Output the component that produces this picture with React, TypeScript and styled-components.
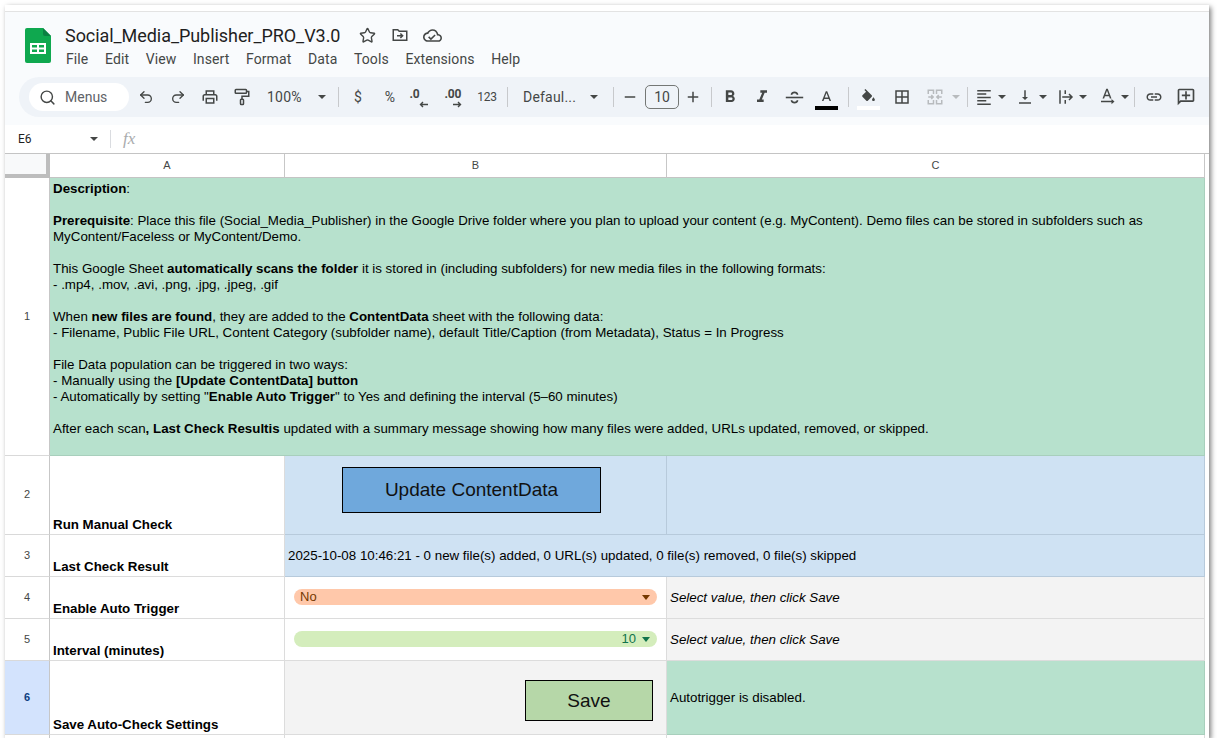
import React from 'react'
import styled, { createGlobalStyle } from 'styled-components'
import { Search, Star, Undo2, Redo2 } from 'lucide-react'

const GlobalStyle = createGlobalStyle`
  html, body {
    margin: 0;
    padding: 0;
    background: #fff;
    overflow: hidden;
  }
  body {
    padding: 5px 0 0 5px;
    font-family: 'Liberation Sans', Arial, sans-serif;
  }
`

const Window = styled.div`
  width: 1204px;
  height: 733px;
  background: #fff;
  box-shadow: 2px 2px 5px rgba(0, 0, 0, 0.5);
  overflow: hidden;
  display: flex;
  flex-direction: column;
`

const TopEdge = styled.div`
  height: 6px;
  flex: none;
  border-bottom: 1px solid #e3e3e3;
`

const Header = styled.header`
  background: #f9fbfd;
  height: 113px;
  flex: none;
  display: flex;
  flex-direction: column;
`

const TitleRow = styled.div`
  height: 65px;
  flex: none;
  display: flex;
  padding: 16px 0 0 20px;
  box-sizing: border-box;
`

const Logo = styled.svg`
  width: 26px;
  height: 35px;
  flex: none;
  margin-right: 14px;
`

const TitleColumn = styled.div`
  display: flex;
  flex-direction: column;
  font-family: Roboto, sans-serif;
  color: #1f1f1f;
`

const TitleLine = styled.div`
  display: flex;
  align-items: center;
  height: 24px;
  margin-top: -5px;
`

const FileName = styled.span`
  font-size: 18px;
  letter-spacing: -0.06px;
  color: #1f1f1f;
  margin-right: 19px;
`

const TitleIcon = styled.span`
  width: 32px;
  height: 24px;
  display: flex;
  align-items: center;
  justify-content: flex-start;
  color: #444746;
`

const MenuBar = styled.nav`
  display: flex;
  gap: 16.6px;
  margin: 4px 0 0 1px;
  font-size: 14px;
  letter-spacing: 0.1px;
  color: #444746;
`

const Toolbar = styled.div`
  height: 40px;
  margin-left: 14px;
  padding-left: 10px;
  flex: none;
  display: flex;
  align-items: center;
  background: #eff3f8;
  border-radius: 20px 0 0 20px;
  color: #444746;
  font-family: Roboto, sans-serif;
`

const SearchPill = styled.div`
  width: 100px;
  height: 28px;
  margin-right: 1px;
  flex: none;
  box-sizing: border-box;
  padding-left: 10px;
  display: flex;
  align-items: center;
  gap: 9px;
  background: #fff;
  border-radius: 14px;
  font-size: 14px;
  color: #5f6368;
`

const Slot = styled.div<{ $w: number; $ml?: number }>`
  width: ${(p) => p.$w}px;
  margin-left: ${(p) => p.$ml || 0}px;
  height: 32px;
  flex: none;
  display: flex;
  align-items: center;
  justify-content: center;
  position: relative;
  font-size: 14px;
`

const DropText = styled.div<{ $w: number; $pad: number; $end: number }>`
  width: ${(p) => p.$w}px;
  height: 32px;
  flex: none;
  box-sizing: border-box;
  padding: 0 ${(p) => p.$end}px 0 ${(p) => p.$pad}px;
  display: flex;
  align-items: center;
  justify-content: space-between;
  font-size: 14px;
  letter-spacing: 0.2px;
`

const Caret = styled.span<{ $muted?: boolean }>`
  width: 0;
  height: 0;
  flex: none;
  border-left: 4.5px solid transparent;
  border-right: 4.5px solid transparent;
  border-top: 4.5px solid ${(p) => (p.$muted ? '#b8bbbe' : '#444746')};
`

const Sep = styled.span`
  width: 1px;
  height: 20px;
  flex: none;
  margin: 0 4px;
  background: #c7c9cc;
`

const Decimal = styled.div<{ $shift: number; $arrow: number }>`
  display: flex;
  flex-direction: column;
  align-items: flex-start;
  font-size: 12px;
  font-weight: 700;
  line-height: 10px;
  letter-spacing: -0.2px;
  margin: 2px ${(p) => p.$shift}px 0 0;

  svg {
    margin: 2px 0 0 ${(p) => p.$arrow}px;
  }
`

const SmallText = styled.span`
  font-size: 12px;
  letter-spacing: -0.2px;
`

const SymbolText = styled.span`
  font-size: 14px;
`

const SizeBox = styled.div`
  width: 34px;
  height: 24px;
  margin-left: 3px;
  flex: none;
  box-sizing: border-box;
  border: 1px solid #747775;
  border-radius: 5px;
  display: flex;
  align-items: center;
  justify-content: center;
  font-size: 14px;
`

const ColorBar = styled.span<{ $color: string }>`
  position: absolute;
  left: 50%;
  margin-left: -11.5px;
  bottom: 3px;
  width: 23px;
  height: 4px;
  background: ${(p) => p.$color};
`

const FormulaBar = styled.div`
  height: 28px;
  flex: none;
  display: flex;
  align-items: center;
  background: #fff;
  font-size: 12px;
  color: #1f1f1f;
  font-family: Roboto, sans-serif;
`

const CellName = styled.div`
  width: 93px;
  box-sizing: border-box;
  padding: 0 0 0 13px;
  display: flex;
  align-items: center;
  justify-content: space-between;
`

const FormulaSep = styled.span`
  width: 1px;
  height: 18px;
  margin: 0 12px 0 12px;
  background: #dadce0;
`

const Fx = styled.span`
  font-family: 'Liberation Serif', serif;
  font-style: italic;
  font-size: 17px;
  color: #a9abad;
`

const Grid = styled.div`
  display: grid;
  grid-template-columns: 45px 235px 382px 538px 4px;
  grid-template-rows: 24px 278px 79px 42px 42px 42px 74px 4px;
  border-top: 1px solid #c4c4c4;
  font-size: 13.33px;
  line-height: 16px;
  color: #000;
`

const Corner = styled.div`
  background: #f8f9fa;
  box-sizing: border-box;
  border-right: 4px solid #bdbdbd;
  border-bottom: 4px solid #bdbdbd;
`

const ColumnHead = styled.div`
  background: #fff;
  box-sizing: border-box;
  border-right: 1px solid #c7c7c7;
  border-bottom: 1px solid #c4c4c4;
  padding-bottom: 2px;
  display: flex;
  align-items: center;
  justify-content: center;
  font-size: 11px;
  color: #444746;
`

const RowHead = styled.div<{ $active?: boolean }>`
  background: ${(p) => (p.$active ? '#d3e3fd' : '#fff')};
  box-sizing: border-box;
  border-right: 1px solid #c7c7c7;
  border-bottom: 1px solid #d9d9d9;
  padding-bottom: 2px;
  display: flex;
  align-items: center;
  justify-content: center;
  font-size: 11px;
  font-weight: ${(p) => (p.$active ? 700 : 400)};
  color: ${(p) => (p.$active ? '#0b3d80' : '#444746')};
`

const Cell = styled.div<{ $bg?: string; $line?: string; $span?: number }>`
  background: ${(p) => p.$bg || '#fff'};
  box-sizing: border-box;
  border-right: 1px solid ${(p) => p.$line || '#dcdcdc'};
  border-bottom: 1px solid ${(p) => p.$line || '#dcdcdc'};
  grid-column: span ${(p) => p.$span || 1};
  padding: 0 3px;
  display: flex;
  white-space: nowrap;
`

const Label = styled(Cell)`
  align-items: flex-end;
  font-weight: 700;
  padding-bottom: 1px;
`

const Middle = styled(Cell)<{ $italic?: boolean }>`
  align-items: center;
  font-style: ${(p) => (p.$italic ? 'italic' : 'normal')};
`

const Description = styled.div`
  padding-top: 3px;
`

const ActionButton = styled.div<{ $bg: string; $w: number; $h: number }>`
  width: ${(p) => p.$w}px;
  height: ${(p) => p.$h}px;
  background: ${(p) => p.$bg};
  box-sizing: border-box;
  border: 1px solid #000;
  display: flex;
  align-items: center;
  justify-content: center;
  font-size: 19px;
  color: #111;
`

const UpdateCell = styled(Cell)`
  padding: 11px 0 0 57px;
`

const SaveCell = styled(Cell)`
  padding: 19px 13px 0 0;
  justify-content: flex-end;
`

const ChipCell = styled(Cell)`
  padding: 12px 9px 0 9px;
`

const Chip = styled.div<{ $bg: string; $fg: string; $right?: boolean }>`
  width: 100%;
  height: 16px;
  box-sizing: border-box;
  padding: 0 7px 0 6px;
  border-radius: 8px;
  background: ${(p) => p.$bg};
  color: ${(p) => p.$fg};
  display: flex;
  align-items: center;
  justify-content: ${(p) => (p.$right ? 'flex-end' : 'space-between')};
  gap: 6px;
  font-size: 13px;
`

const ChipCaret = styled.span<{ $color: string }>`
  width: 0;
  height: 0;
  border-left: 4.5px solid transparent;
  border-right: 4.5px solid transparent;
  border-top: 5px solid ${(p) => p.$color};
`

const Filler = styled.div`
  background: #fff;
`

const GREEN = '#b7e1cd'
const GREEN_LINE = '#a8cfbc'
const BLUE = '#cfe2f3'
const BLUE_LINE = '#b7cadb'
const GREY = '#f3f3f3'

type IconProps = { d: string; size?: number; color?: string }

const Icon = ({ d, size = 18, color = '#444746' }: IconProps) => (
  <svg width={size} height={size} viewBox="0 0 24 24" fill={color}>
    <path d={d} />
  </svg>
)

const PRINT =
  'M19 8h-1V3H6v5H5c-1.66 0-3 1.34-3 3v6h4v4h12v-4h4v-6c0-1.66-1.34-3-3-3zM8 5h8v3H8V5zm8 14H8v-4h8v4zm2-2v-4H6v4H4v-6c0-.55.45-1 1-1h14c.55 0 1 .45 1 1v6h-2z'
const BOLD =
  'M15.6 10.79c.97-.67 1.65-1.77 1.65-2.79 0-2.26-1.75-4-4-4H7v14h7.04c2.09 0 3.71-1.7 3.71-3.79 0-1.52-.86-2.82-2.15-3.42zM10 6.5h3c.83 0 1.5.67 1.5 1.5s-.67 1.5-1.5 1.5h-3v-3zm3.5 9H10v-3h3.5c.83 0 1.5.67 1.5 1.5s-.67 1.5-1.5 1.5z'
const ITALIC = 'M10 4v3h2.21l-3.42 8H6v3h8v-3h-2.21l3.42-8H18V4z'
const LETTER_A = 'M11 3 5.5 17h2.25l1.12-3h6.25l1.12 3h2.25L13 3h-2zm-1.38 9L12 5.67 14.38 12H9.62z'
const FILL =
  'M16.56 8.94 7.62 0 6.21 1.41l2.38 2.38-5.15 5.15c-.59.59-.59 1.54 0 2.12l5.5 5.5c.59.59 1.53.59 2.12 0l5.5-5.5c.59-.58.59-1.53 0-2.12zM19 11.5s-2 2.17-2 3.5c0 1.1.9 2 2 2s2-.9 2-2c0-1.33-2-3.5-2-3.5z'
const BORDERS = 'M3 3v18h18V3H3zm8 16H5v-6h6v6zm0-8H5V5h6v6zm8 8h-6v-6h6v6zm0-8h-6V5h6v6z'
const VALIGN = 'M16 12h-3V3h-2v9H8l4 4 4-4zM4 19v2h16v-2H4z'
const LINK =
  'M3.9 12c0-1.71 1.39-3.1 3.1-3.1h4V7H7c-2.76 0-5 2.24-5 5s2.24 5 5 5h4v-1.9H7c-1.71 0-3.1-1.39-3.1-3.1zM8 13h8v-2H8v2zm9-6h-4v1.9h4c1.71 0 3.1 1.39 3.1 3.1s-1.39 3.1-3.1 3.1h-4V17h4c2.76 0 5-2.24 5-5s-2.24-5-5-5z'
const CLOUD =
  'M19.35 10.04C18.67 6.59 15.64 4 12 4 9.11 4 6.6 5.64 5.35 8.04 2.34 8.36 0 10.91 0 14c0 3.31 2.69 6 6 6h13c2.76 0 5-2.24 5-5 0-2.64-2.05-4.78-4.65-4.96zM19 18H6c-2.21 0-4-1.79-4-4s1.79-4 4-4h.71C7.37 7.69 9.48 6 12 6c3.04 0 5.5 2.46 5.5 5.5v.5H19c1.66 0 3 1.34 3 3s-1.34 3-3 3zm-9-2.83L7.83 13l-1.41 1.41L10 18l6-6-1.41-1.41z'

const SheetsLogo = () => (
  <Logo viewBox="0 0 26 35">
    <path d="M2 0h16l8 8v25a2 2 0 0 1-2 2H2a2 2 0 0 1-2-2V2a2 2 0 0 1 2-2z" fill="#0fa84f" />
    <path d="M18 0l8 8h-6a2 2 0 0 1-2-2z" fill="#0b8043" />
    <path d="M5 15h16v11H5z M7 17v2.5h5V17z M14 17v2.5h5V17z M7 21.5V24h5v-2.5z M14 21.5V24h5v-2.5z" fill="#fff" fillRule="evenodd" />
  </Logo>
)

const FolderMove = () => (
  <svg width="18" height="18" viewBox="0 0 24 24" fill="none" stroke="#444746" strokeWidth="2">
    <path d="M3 5h6l2 2h10v12H3z" />
    <path d="M8 13h7M12.5 10l3 3-3 3" />
  </svg>
)

const PaintRoller = () => (
  <svg width="18" height="18" viewBox="0 0 24 24" fill="none" stroke="#444746" strokeWidth="2">
    <rect x="3" y="2" width="15" height="5" rx="1" />
    <path d="M18 4.5h3V11h-9v4" />
    <rect x="10" y="15" width="4" height="7" rx="1" />
  </svg>
)

const Strike = () => (
  <svg width="19" height="19" viewBox="0 0 24 24" fill="none" stroke="#444746" strokeWidth="2">
    <path d="M1 12h22" />
    <path d="M16 8.5C15.5 6.5 14 5.5 12 5.5S8.5 6.5 8 8.5M8 15.5c.5 2 2 3 4 3s3.500-1 4-3" />
  </svg>
)

const MergeCells = () => (
  <svg width="18" height="18" viewBox="0 0 24 24" fill="none" stroke="#b8bbbe" strokeWidth="2">
    <path d="M3 8V3h7v5M3 16v5h7v-5M14 8V3h7v5M14 16v5h7v-5" />
    <path d="M3 12h6M7 9.500 9.500 12 7 14.500M21 12h-6M17 9.500 14.500 12l2.500 2.500" />
  </svg>
)

const AlignLeft = () => (
  <svg width="18" height="18" viewBox="0 0 24 24" fill="none" stroke="#444746" strokeWidth="2">
    <path d="M3 3.500h18M3 8h12M3 12.500h18M3 17h12M3 21.500h18" />
  </svg>
)

const WrapIcon = () => (
  <svg width="18" height="18" viewBox="0 0 24 24" fill="none" stroke="#444746" strokeWidth="2">
    <path d="M4 3v18M11 3v5M11 16v5M7 12h13M16 8l4 4-4 4" />
  </svg>
)

const RotateIcon = () => (
  <svg width="18" height="18" viewBox="0 0 24 24" fill="#444746">
    <path d="M11 1 6 14h2.200l1-3h5.600l1 3H18L13 1h-2zm-1.100 8L12 3.600 14.100 9H9.900z" />
    <path d="M4 17h14v-2.500l4 3.500-4 3.500V19H4z" />
  </svg>
)

const CommentIcon = () => (
  <svg width="20" height="20" viewBox="0 0 24 24" fill="#444746">
    <g transform="translate(24 0) scale(-1 1)">
      <path d="M22 4c0-1.100-.9-2-2-2H4c-1.100 0-2 .9-2 2v12c0 1.100.9 2 2 2h14l4 4V4zm-2 13.170L18.830 16H4V4h16v13.170zM13 5h-2v4H7v2h4v4h2v-4h4V9h-4z" />
    </g>
  </svg>
)

const ArrowLeft = () => (
  <svg width="9" height="7" viewBox="0 0 9 7" fill="none" stroke="#444746" strokeWidth="1.400">
    <path d="M9 3.500H1.500M4 1 1.500 3.500 4 6" />
  </svg>
)

const ArrowRight = () => (
  <svg width="9" height="7" viewBox="0 0 9 7" fill="none" stroke="#444746" strokeWidth="1.400">
    <path d="M0 3.500h7.500M5 1l2.500 2.500L5 6" />
  </svg>
)

const MENU = ['File', 'Edit', 'View', 'Insert', 'Format', 'Data', 'Tools', 'Extensions', 'Help']

export default function App() {
  return (
    <>
      <GlobalStyle />
      <Window>
        <TopEdge />
        <Header>
          <TitleRow>
            <SheetsLogo />
            <TitleColumn>
              <TitleLine>
                <FileName>Social_Media_Publisher_PRO_V3.0</FileName>
                <TitleIcon><Star size={17} strokeWidth={2} /></TitleIcon>
                <TitleIcon><FolderMove /></TitleIcon>
                <TitleIcon><Icon d={CLOUD} size={19} /></TitleIcon>
              </TitleLine>
              <MenuBar>
                {MENU.map((item) => (
                  <span key={item}>{item}</span>
                ))}
              </MenuBar>
            </TitleColumn>
          </TitleRow>
          <Toolbar>
            <SearchPill>
              <Search size={17} strokeWidth={2} color="#444746" />
              Menus
            </SearchPill>
            <Slot $w={32}><Undo2 size={16} strokeWidth={2} /></Slot>
            <Slot $w={32}><Redo2 size={16} strokeWidth={2} /></Slot>
            <Slot $w={32}><Icon d={PRINT} /></Slot>
            <Slot $w={31}><PaintRoller /></Slot>
            <DropText $w={77} $pad={10} $end={8}>100%<Caret /></DropText>
            <Sep />
            <Slot $w={30}><SymbolText>$</SymbolText></Slot>
            <Slot $w={34}><SymbolText>%</SymbolText></Slot>
            <Slot $w={28}>
              <Decimal $shift={5} $arrow={9}>.0<ArrowLeft /></Decimal>
            </Slot>
            <Slot $w={36}>
              <Decimal $shift={0} $arrow={8}>.00<ArrowRight /></Decimal>
            </Slot>
            <Slot $w={32}><SmallText>123</SmallText></Slot>
            <Sep />
            <DropText $w={97} $pad={11} $end={11}>Defaul...<Caret /></DropText>
            <Sep />
            <Slot $w={24}><Icon d="M5 11h14v2H5z" /></Slot>
            <SizeBox>10</SizeBox>
            <Slot $w={28}><Icon d="M19 13h-6v6h-2v-6H5v-2h6V5h2v6h6z" /></Slot>
            <Sep />
            <Slot $w={28}><Icon d={BOLD} size={20} /></Slot>
            <Slot $w={36}><Icon d={ITALIC} size={20} /></Slot>
            <Slot $w={28}><Strike /></Slot>
            <Slot $w={36}>
              <Icon d={LETTER_A} size={17} />
              <ColorBar $color="#000" />
            </Slot>
            <Sep />
            <Slot $w={30}>
              <Icon d={FILL} size={17} />
              <ColorBar $color="#fff" />
            </Slot>
            <Slot $w={38}><Icon d={BORDERS} /></Slot>
            <Slot $w={28}><MergeCells /></Slot>
            <Slot $w={14}><Caret $muted /></Slot>
            <Sep />
            <Slot $w={24}><AlignLeft /></Slot>
            <Slot $w={12}><Caret /></Slot>
            <Slot $w={26} $ml={4}><Icon d={VALIGN} /></Slot>
            <Slot $w={10}><Caret /></Slot>
            <Slot $w={24} $ml={6}><WrapIcon /></Slot>
            <Slot $w={10}><Caret /></Slot>
            <Slot $w={24} $ml={7}><RotateIcon /></Slot>
            <Slot $w={10} $ml={1}><Caret /></Slot>
            <Sep />
            <Slot $w={30}><Icon d={LINK} /></Slot>
            <Slot $w={34}><CommentIcon /></Slot>
          </Toolbar>
        </Header>
        <FormulaBar>
          <CellName>E6<Caret /></CellName>
          <FormulaSep />
          <Fx>fx</Fx>
        </FormulaBar>
        <Grid>
          <Corner />
          <ColumnHead>A</ColumnHead>
          <ColumnHead>B</ColumnHead>
          <ColumnHead>C</ColumnHead>
          <Filler />

          <RowHead>1</RowHead>
          <Cell $bg={GREEN} $line={GREEN_LINE} $span={3}>
            <Description>
              <b>Description</b>:<br />
              <br />
              <b>Prerequisite</b>: Place this file (Social_Media_Publisher) in the Google Drive folder where you plan to upload your content (e.g. MyContent). Demo files can be stored in subfolders such as<br />
              MyContent/Faceless or MyContent/Demo.<br />
              <br />
              This Google Sheet <b>automatically scans the folder</b> it is stored in (including subfolders) for new media files in the following formats:<br />
              - .mp4, .mov, .avi, .png, .jpg, .jpeg, .gif<br />
              <br />
              When <b>new files are found</b>, they are added to the <b>ContentData</b> sheet with the following data:<br />
              - Filename, Public File URL, Content Category (subfolder name), default Title/Caption (from Metadata), Status = In Progress<br />
              <br />
              File Data population can be triggered in two ways:<br />
              - Manually using the <b>[Update ContentData] button</b><br />
              - Automatically by setting "<b>Enable Auto Trigger</b>" to Yes and defining the interval (5–60 minutes)<br />
              <br />
              After each scan<b>, Last Check Resultis</b> updated with a summary message showing how many files were added, URLs updated, removed, or skipped.
            </Description>
          </Cell>
          <Filler />

          <RowHead>2</RowHead>
          <Label>Run Manual Check</Label>
          <UpdateCell $bg={BLUE} $line={BLUE_LINE}>
            <ActionButton $bg="#6fa8dc" $w={259} $h={46}>Update ContentData</ActionButton>
          </UpdateCell>
          <Cell $bg={BLUE} $line={BLUE_LINE} />
          <Filler />

          <RowHead>3</RowHead>
          <Label>Last Check Result</Label>
          <Middle $bg={BLUE} $line={BLUE_LINE} $span={2}>
            2025-10-08 10:46:21 - 0 new file(s) added, 0 URL(s) updated, 0 file(s) removed, 0 file(s) skipped
          </Middle>
          <Filler />

          <RowHead>4</RowHead>
          <Label>Enable Auto Trigger</Label>
          <ChipCell>
            <Chip $bg="#ffc8aa" $fg="#753800">No<ChipCaret $color="#753800" /></Chip>
          </ChipCell>
          <Middle $bg={GREY} $italic>Select value, then click Save</Middle>
          <Filler />

          <RowHead>5</RowHead>
          <Label>Interval (minutes)</Label>
          <ChipCell>
            <Chip $bg="#d4edbc" $fg="#11734b" $right>10<ChipCaret $color="#11734b" /></Chip>
          </ChipCell>
          <Middle $bg={GREY} $italic>Select value, then click Save</Middle>
          <Filler />

          <RowHead $active>6</RowHead>
          <Label>Save Auto-Check Settings</Label>
          <SaveCell $bg={GREY}>
            <ActionButton $bg="#b6d7a8" $w={128} $h={41}>Save</ActionButton>
          </SaveCell>
          <Middle $bg={GREEN} $line={GREEN_LINE}>Autotrigger is disabled.</Middle>
          <Filler />

          <RowHead />
          <Cell />
          <Cell />
          <Cell />
          <Filler />
        </Grid>
      </Window>
    </>
  )
}
